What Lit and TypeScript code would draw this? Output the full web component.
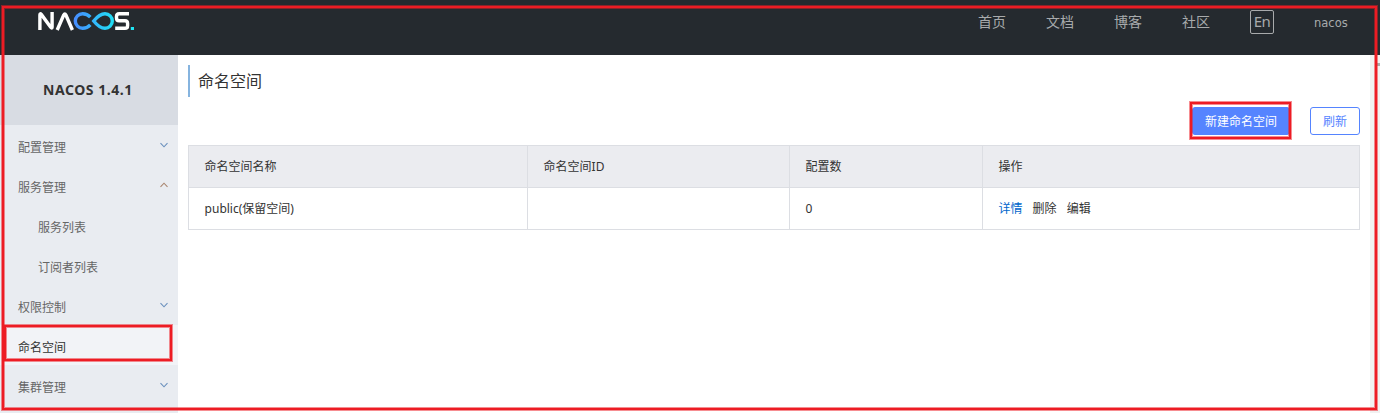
import { LitElement, html, css, svg } from "lit";
import { customElement, property } from "lit/decorators.js";

@customElement("nacos-logo")
class NacosLogo extends LitElement {
  static styles = css`
    :host { display: block; width: 100px; height: 20px; }
    svg { display: block; }
  `;
  render() {
    return html`<svg width="100" height="20" viewBox="37 11 100 20" fill="none" stroke-width="3.4">
      <defs>
        <linearGradient id="g" gradientUnits="userSpaceOnUse" x1="74" y1="0" x2="114" y2="0">
          <stop offset="0" stop-color="#478cff" />
          <stop offset="1" stop-color="#1fe0f5" />
        </linearGradient>
      </defs>
      <path d="M39.9 30V14.8Q40 13 41.3 14.4L50.7 27.3Q52 28.9 52.1 27.1V12" stroke="#fff" />
      <path d="M57.2 30L63.7 15Q64.8 12.9 65.9 15L72.4 30" stroke="#fff" />
      <path d="M90.3 17.1C88.3 14.9 85.8 13.7 82.6 13.7A7.3 7.3 0 0 0 82.6 28.3C85.8 28.3 88.3 27.1 90.3 24.9" stroke="url(#g)" />
      <path d="M93.7 21C97.5 16.2 100.5 13.7 105 13.7A7.3 7.3 0 0 1 105 28.3C100.5 28.3 97.5 25.8 93.7 21Z" stroke="url(#g)" />
      <path d="M129 13.7H119.2Q116.5 13.7 116.5 16.5V18Q116.5 20.8 119.2 20.8H125Q127.6 20.8 127.6 23.6V25.4Q127.6 28.3 125 28.3H115.2" stroke="#fff" />
      <rect x="130.8" y="27" width="3.2" height="3" fill="#1fe5f5" />
    </svg>`;
  }
}

@customElement("nav-item")
class NavItem extends LitElement {
  @property() label = "";
  @property() arrow = "";
  @property({ type: Boolean, reflect: true }) sub = false;
  @property({ type: Boolean, reflect: true }) active = false;
  static styles = css`
    :host {
      display: flex; box-sizing: border-box; height: 40px; padding: 6px 10px 0 18px;
      align-items: center; justify-content: space-between;
      font-size: 12px; line-height: 20px; color: #666;
    }
    :host([sub]) { padding-left: 38px; }
    :host([active]) { background: #f2f3f7; color: #333; }
    svg { display: block; margin-top: -6px; }
  `;
  render() {
    const paths: Record<string, unknown> = {
      down: svg`<path d="M0.5 1.2L4 4.8L7.5 1.2" stroke="#6a90bd" stroke-width="1.1" />`,
      up: svg`<path d="M0.5 4.8L4 1.2L7.5 4.8" stroke="#a9856f" stroke-width="1.1" />`,
    };
    return html`<span>${this.label}</span>
      ${this.arrow ? html`<svg width="8" height="6" viewBox="0 0 8 6" fill="none">${paths[this.arrow]}</svg>` : ""}`;
  }
}

@customElement("app-root")
class AppRoot extends LitElement {
  static styles = css`
    :host {
      display: block; position: relative; width: 1380px; height: 413px; overflow: hidden;
      background: #fff; color: #333; font-size: 12px; line-height: 20px;
      font-family: "Noto Sans", "Noto Sans CJK SC", sans-serif;
    }
    * { box-sizing: border-box; }
    header {
      display: flex; height: 55px; background: #252a2f; color: #a8aaac;
      font-size: 14px; padding: 0 33px 0 37px; justify-content: space-between;
    }
    nacos-logo { margin-top: 11px; }
    .links { display: flex; align-items: center; height: 44px; }
    .links a { margin-right: 40px; white-space: nowrap; }
    .links .lang {
      width: 24px; height: 24px; border: 1px solid #a8aaac; border-radius: 2px;
      font-size: 15px; letter-spacing: -0.5px; line-height: 20px; text-align: center;
    }
    .links .user {
      margin-right: 0; width: 33px; padding-top: 1px;
      font-family: "DejaVu Sans", sans-serif; font-size: 11.5px;
    }
    .body { display: flex; height: 358px; }
    aside { width: 178px; background: #e9ecf1; flex: none; }
    .version {
      height: 70px; background: #d8dce3; font-weight: 700; line-height: 70px;
      font-size: 14px; letter-spacing: 0.55px; padding-left: 43px; white-space: nowrap;
    }
    main { flex: 1; padding: 10px 10px 0; }
    h1 {
      margin: 0; height: 32px; border-left: 2px solid #86b4df; padding-left: 8px;
      font-size: 16px; line-height: 33px; font-weight: 400;
    }
    .actions { display: flex; justify-content: flex-end; gap: 20px; margin: 10px 0; height: 28px; }
    button {
      border: 1px solid #5584ff; border-radius: 3px; height: 28px; padding: 1px 0 0;
      font: inherit; line-height: 25px; width: 50px; background: #fff; color: #5584ff;
    }
    button.primary { width: 98px; background: #5584ff; color: #fff; }
    .table {
      display: grid; grid-template-columns: 339px 262px 193px 377px;
      border: solid #dcdee3; border-width: 1px 0 0 1px;
    }
    .cell {
      height: 42px; padding: 0 15.6px; line-height: 42px; border: solid #dcdee3;
      border-width: 0 1px 1px 0; white-space: nowrap;
    }
    .head { background: #ebecf0; }
    .ops { display: flex; gap: 10px; }
    .ops .link { color: #06c; }
    .scroll { width: 10px; background: #f1f1f1; padding-top: 8px; }
    .thumb { width: 5px; height: 3px; margin-left: 5px; background: #a9a9a9; }
    .mark {
      position: absolute; border: 2px solid #ed1c24; pointer-events: none;
      box-shadow: 0 0 0 1px rgba(237, 28, 36, 0.5), inset 0 0 0 1px rgba(237, 28, 36, 0.5);
    }
    .frame { left: 2px; top: 6px; width: 1375px; height: 404px; }
    .menu { left: 4px; top: 325px; width: 168px; height: 36px; }
    .create { left: 1190px; top: 102px; width: 101px; height: 37px; }
  `;
  render() {
    return html`
      <header>
        <nacos-logo></nacos-logo>
        <nav class="links">
          <a>首页</a><a>文档</a><a>博客</a><a>社区</a><a class="lang">En</a><a class="user">nacos</a>
        </nav>
      </header>
      <div class="body">
        <aside>
          <div class="version">NACOS 1.4.1</div>
          <nav-item label="配置管理" arrow="down"></nav-item>
          <nav-item label="服务管理" arrow="up"></nav-item>
          <nav-item label="服务列表" sub></nav-item>
          <nav-item label="订阅者列表" sub></nav-item>
          <nav-item label="权限控制" arrow="down"></nav-item>
          <nav-item label="命名空间" active></nav-item>
          <nav-item label="集群管理" arrow="down"></nav-item>
        </aside>
        <main>
          <h1>命名空间</h1>
          <div class="actions">
            <button class="primary">新建命名空间</button>
            <button>刷新</button>
          </div>
          <div class="table">
            ${["命名空间名称", "命名空间ID", "配置数", "操作"].map((t) => html`<div class="cell head">${t}</div>`)}
            <div class="cell">public(保留空间)</div>
            <div class="cell"></div>
            <div class="cell">0</div>
            <div class="cell ops"><span class="link">详情</span><span>删除</span><span>编辑</span></div>
          </div>
        </main>
        <div class="scroll"><div class="thumb"></div></div>
      </div>
      <div class="mark frame"></div>
      <div class="mark menu"></div>
      <div class="mark create"></div>
    `;
  }
}
